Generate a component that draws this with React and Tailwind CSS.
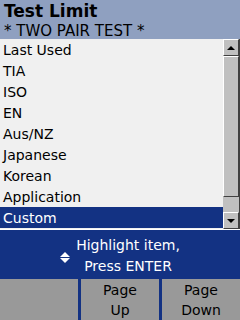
import React from "react";

const items = ["Last Used", "TIA", "ISO", "EN", "Aus/NZ", "Japanese", "Korean", "Application", "Custom"];

export default function App() {
  return (
    <div className="w-[240px] h-[320px] flex flex-col overflow-hidden bg-[#f0f0f0]" style={{ fontFamily: '"DejaVu Sans", sans-serif' }}>
      <div className="h-[39px] bg-[#8fa0c0] px-[4px] pt-[3px] flex flex-col leading-none">
        <div className="text-[17px] font-bold text-black">Test Limit</div>
        <div className="text-[15px] text-black mt-[4px]">* TWO PAIR TEST *</div>
      </div>
      <div className="h-[190px] flex">
        <div className="flex-1 flex flex-col">
          {items.map((t, i) => (
            <div
              key={t}
              className={`h-[21px] flex items-center px-[3px] pt-[2px] text-[14px] ${i === items.length - 1 ? "bg-[#133283] text-white" : "text-black"}`}
            >
              {t}
            </div>
          ))}
        </div>
        <div className="w-[17px] flex flex-col bg-[#c0c0c0] border-r border-[#404040]">
          <div className="h-[17px] bg-[#c0c0c0] border border-t-white border-l-white border-r-[#404040] border-b-[#404040] flex items-center justify-center">
            <div className="w-0 h-0 border-l-[4px] border-r-[4px] border-b-[4px] border-l-transparent border-r-transparent border-b-black" />
          </div>
          <div className="h-[141px] bg-[#c0c0c0] border border-t-white border-l-white border-r-[#404040] border-b-[#404040]" />
          <div className="flex-1" />
          <div className="h-[17px] bg-[#c0c0c0] border border-t-white border-l-white border-r-[#404040] border-b-[#404040] flex items-center justify-center">
            <div className="w-0 h-0 border-l-[4px] border-r-[4px] border-t-[4px] border-l-transparent border-r-transparent border-t-black" />
          </div>
        </div>
      </div>
      <div className="h-[1px] bg-white" />
      <div className="h-[49px] bg-[#133283] flex items-center justify-center text-white text-[14px] pt-[3px]">
        <div className="flex flex-col items-center mr-[6px] mt-[2px]">
          <div className="w-0 h-0 border-l-[5px] border-r-[5px] border-b-[5px] border-l-transparent border-r-transparent border-b-white" />
          <div className="h-[1px]" />
          <div className="w-0 h-0 border-l-[5px] border-r-[5px] border-t-[5px] border-l-transparent border-r-transparent border-t-white" />
        </div>
        <div className="flex flex-col items-center leading-[21px]">
          <div>Highlight item,</div>
          <div>Press ENTER</div>
        </div>
      </div>
      <div className="flex-1 bg-[#133283] flex gap-[3px]">
        <div className="flex-1 bg-[#999999]" />
        <div className="flex-1 bg-[#999999] flex flex-col items-center justify-center text-black text-[14px] leading-[20px]">
          <div>Page</div>
          <div>Up</div>
        </div>
        <div className="flex-1 bg-[#999999] flex flex-col items-center justify-center text-black text-[14px] leading-[20px]">
          <div>Page</div>
          <div>Down</div>
        </div>
      </div>
    </div>
  );
}
